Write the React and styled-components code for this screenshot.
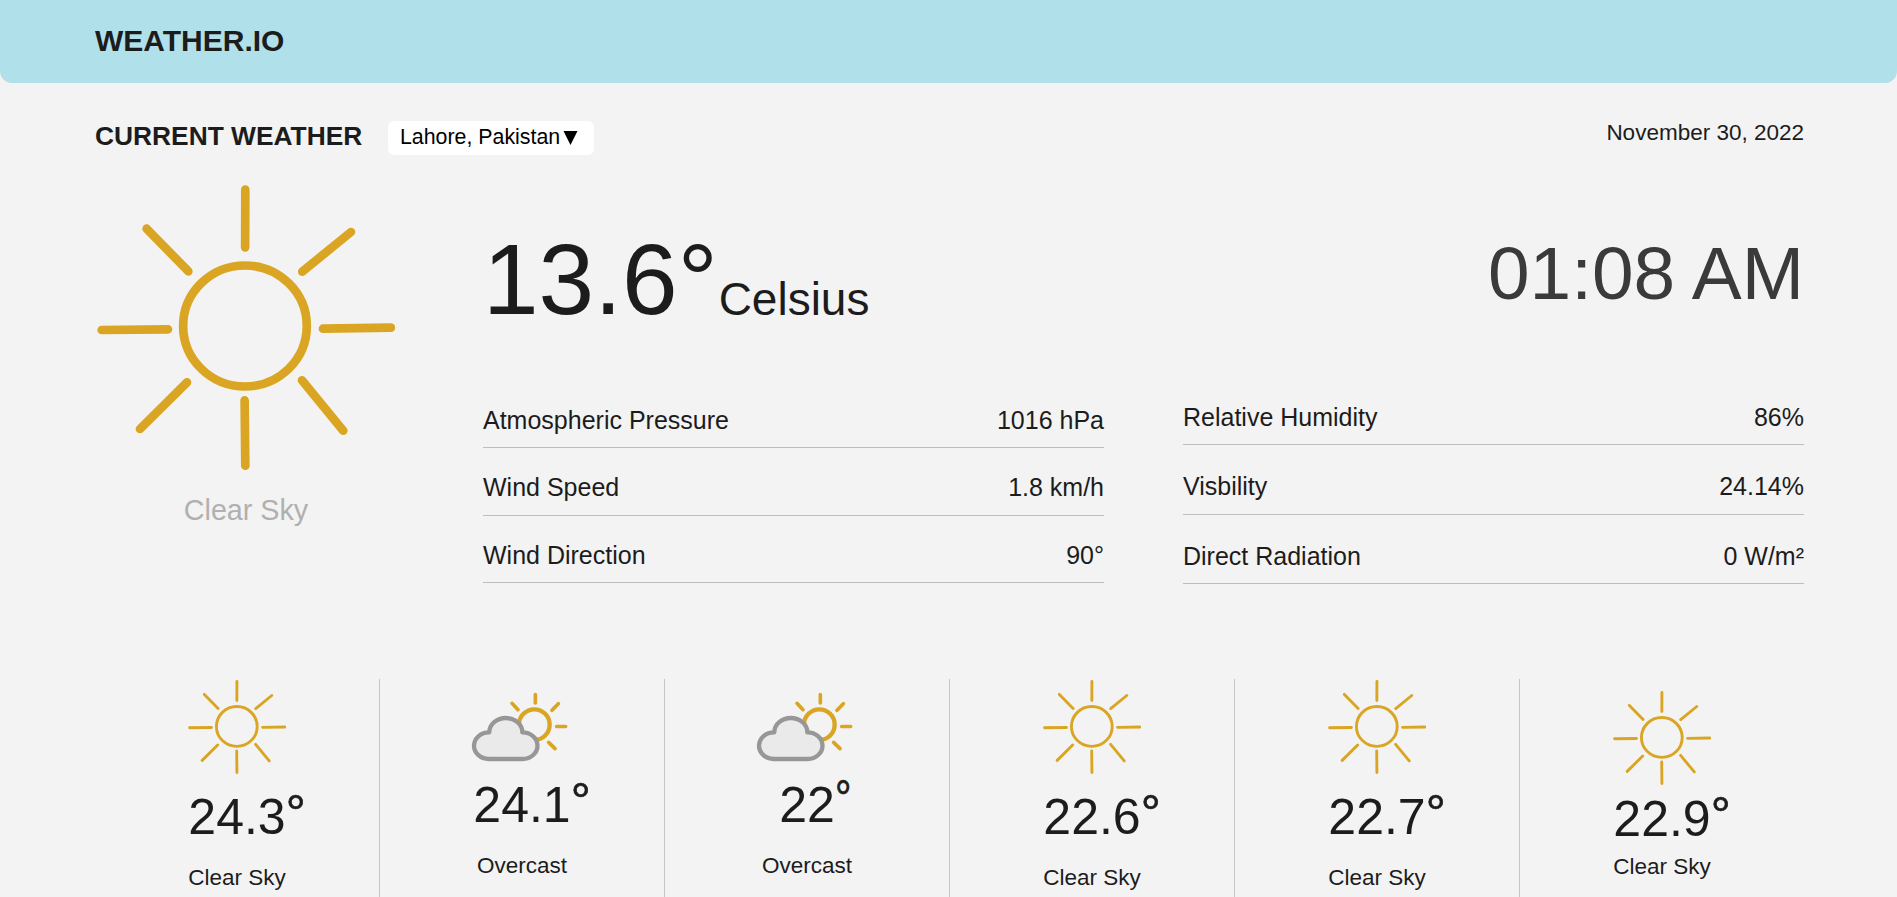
import React from "react";
import styled, { createGlobalStyle } from "styled-components";

const GlobalStyle = createGlobalStyle`
  *, *::before, *::after { box-sizing: border-box; }
  body {
    margin: 0;
    background: #f3f3f3;
    color: #1c1c1c;
    font-family: "Liberation Sans", Arial, sans-serif;
  }
`;

const Page = styled.div`
  height: 100vh;
  overflow: hidden;
  display: flex;
  flex-direction: column;
`;

const Header = styled.header`
  flex: none;
  display: flex;
  align-items: center;
  height: 83px;
  padding: 0 93px 2px 95px;
  background: #b0e0ea;
  border-radius: 0 0 12px 12px;
`;

const Brand = styled.h1`
  margin: 0;
  font-size: 30px;
  line-height: 34px;
`;

const Main = styled.main`
  flex: 1;
  min-height: 0;
  display: flex;
  flex-direction: column;
  padding: 38px 93px 0 95px;
`;

const Toolbar = styled.div`
  flex: none;
  display: flex;
  align-items: flex-start;
  height: 34px;
`;

const Title = styled.h2`
  margin: 0;
  width: 293px;
  font-size: 26.35px;
  line-height: 30px;
  white-space: nowrap;
`;

const CityButton = styled.button`
  display: flex;
  align-items: center;
  gap: 3px;
  width: 206px;
  height: 34px;
  padding: 0 0 1px 12px;
  border: 0;
  border-radius: 6px;
  background: #fff;
  color: #000;
  font: 21.35px "Liberation Sans", Arial, sans-serif;
  white-space: nowrap;
`;

const DateText = styled.time`
  margin-left: auto;
  font-size: 22.5px;
  line-height: 24px;
`;

const Current = styled.section`
  flex: none;
  display: flex;
  height: 524px;
`;

const SkyPanel = styled.div`
  display: flex;
  flex-direction: column;
  align-items: center;
  width: 302px;
  margin-right: 86px;
  padding-top: 30px;
`;

const SkyLabel = styled.p`
  margin: 24px 0 0;
  font-size: 28.7px;
  line-height: 32px;
  color: #b0b0b0;
`;

const Details = styled.div`
  flex: 1;
  display: flex;
  flex-direction: column;
`;

const Summary = styled.div`
  display: flex;
  justify-content: space-between;
  height: 220px;
`;

const Temperature = styled.div`
  display: flex;
  align-items: baseline;
  margin-top: 74px;
  font-size: 100px;
  line-height: 100px;
`;

const Unit = styled.span`
  margin-left: 1px;
  padding-top: 1px;
  font-size: 46px;
  transform: translateY(1px);
`;

const Clock = styled.time`
  margin-top: 81px;
  font-size: 74.8px;
  line-height: 74px;
  color: #3a3a3a;
`;

const Metrics = styled.div`
  display: grid;
  grid-template-columns: 1fr 1fr;
  column-gap: 79px;
  align-items: start;
`;

const MetricList = styled.dl`
  margin: ${(p) => p.$top}px 0 0;
`;

const Metric = styled.div`
  display: flex;
  align-items: flex-end;
  justify-content: space-between;
  height: ${(p) => p.$pitch}px;
  padding-bottom: ${(p) => p.$pad}px;
  border-bottom: 1px solid #bdbdbd;
  font-size: 25px;
  line-height: 28px;

  dd {
    margin: 0;
  }
`;

const Forecast = styled.section`
  flex: 1;
  display: grid;
  grid-template-columns: repeat(6, 285px);
`;

const Day = styled.article`
  display: flex;
  flex-direction: column;
  align-items: center;
  padding-top: ${(p) => p.$top}px;
  border-right: 1px solid #c4c4c4;

  &:last-child {
    border-right-color: transparent;
  }
`;

const DayTemp = styled.div`
  margin-top: ${(p) => p.$gap}px;
  font-size: 50px;
  line-height: 50px;
  white-space: nowrap;
`;

/* The degree mark hangs outside the centred number. */
const Degree = styled.span`
  display: inline-block;
  width: 0;
  line-height: 0;
  vertical-align: ${(p) => p.$raise}px;
  -webkit-text-stroke: 0.7px currentColor;
  transform: scaleX(${(p) => p.$stretch});
  transform-origin: left;
`;

const DayLabel = styled.div`
  margin-top: ${(p) => p.$gap}px;
  font-size: 22.5px;
  line-height: 24px;
`;

const Icon = styled.svg`
  display: block;
  flex: none;
`;

const CloudIcon = styled(Icon)`
  margin-right: 5px;
`;

function Sun({ width, height }) {
  return (
    <Icon width={width} height={height} viewBox="50 44 896 856" preserveAspectRatio="none"
      fill="none" stroke="#d9a522" strokeWidth="26" strokeLinecap="round">
      <ellipse cx="494" cy="467" rx="185.5" ry="181.5" />
      <path d="M495 58L494.5 231M199 175L324 303M812 185L666 304M64 479L263 477M728 475L932 472M320 636L179 776M665 630L789 781M493 690L495 886" />
    </Icon>
  );
}

function CloudSun() {
  return (
    <CloudIcon width="97" height="70" viewBox="935 67 291 210" fill="none" strokeLinecap="round" strokeLinejoin="round">
      <circle cx="1125" cy="165" r="46" stroke="#d9a522" strokeWidth="13" />
      <path stroke="#d9a522" strokeWidth="11"
        d="M1128 75V100M1058 101L1076 120M1197 102L1178 122M1192 170.5H1219M1168 218L1187 237" />
      <path fill="#eaeaea" stroke="#979797" strokeWidth="13"
        d="M988 268A45 40 0 0 1 990 188A49.500 43 0 0 1 1089 188A45 40 0 0 1 1090 268Z" />
    </CloudIcon>
  );
}

const leftMetrics = [
  ["Atmospheric Pressure", "1016 hPa"],
  ["Wind Speed", "1.8 km/h"],
  ["Wind Direction", "90°"],
];

const rightMetrics = [
  ["Relative Humidity", "86%"],
  ["Visbility", "24.14%"],
  ["Direct Radiation", "0 W/m²"],
];

const clear = { label: "Clear Sky", top: 1, gap: 18, labelGap: 24 };
const overcast = { label: "Overcast", top: 13, gap: 18, labelGap: 24, cloudy: true };

const days = [
  { ...clear, temp: "24.3" },
  { ...overcast, temp: "24.1" },
  { ...overcast, temp: "22", raise: 7, stretch: 0.82 },
  { ...clear, temp: "22.6" },
  { ...clear, temp: "22.7" },
  { ...clear, temp: "22.9", top: 12, gap: 9, labelGap: 11 },
];

function MetricGroup({ items, top, pitch, pad }) {
  return (
    <MetricList $top={top}>
      {items.map(([name, value]) => (
        <Metric key={name} $pitch={pitch} $pad={pad}>
          <dt>{name}</dt>
          <dd>{value}</dd>
        </Metric>
      ))}
    </MetricList>
  );
}

export default function App() {
  return (
    <Page>
      <GlobalStyle />
      <Header>
        <Brand>WEATHER.IO</Brand>
      </Header>
      <Main>
        <Toolbar>
          <Title>CURRENT WEATHER</Title>
          <CityButton>
            Lahore, Pakistan
            <Icon width="15" height="14" viewBox="0 0 15 14">
              <path d="M0.500 0H14.500L7.500 14Z" fill="#000" />
            </Icon>
          </CityButton>
          <DateText>November 30, 2022</DateText>
        </Toolbar>
        <Current>
          <SkyPanel>
            <Sun width="298.600" height="285.300" />
            <SkyLabel>Clear Sky</SkyLabel>
          </SkyPanel>
          <Details>
            <Summary>
              <Temperature>
                13.6°<Unit>Celsius</Unit>
              </Temperature>
              <Clock>01:08 AM</Clock>
            </Summary>
            <Metrics>
              <MetricGroup items={leftMetrics} top={5.8} pitch={67.5} pad={13.4} />
              <MetricGroup items={rightMetrics} top={0.8} pitch={69.5} pad={13.8} />
            </Metrics>
          </Details>
        </Current>
        <Forecast>
          {days.map((d, i) => (
            <Day key={i} $top={d.top}>
              {d.cloudy ? <CloudSun /> : <Sun width="98.500" height="94" />}
              <DayTemp $gap={d.gap}>
                {d.temp}
                <Degree $raise={d.raise ?? 4} $stretch={d.stretch ?? 1}>°</Degree>
              </DayTemp>
              <DayLabel $gap={d.labelGap}>{d.label}</DayLabel>
            </Day>
          ))}
        </Forecast>
      </Main>
    </Page>
  );
}
